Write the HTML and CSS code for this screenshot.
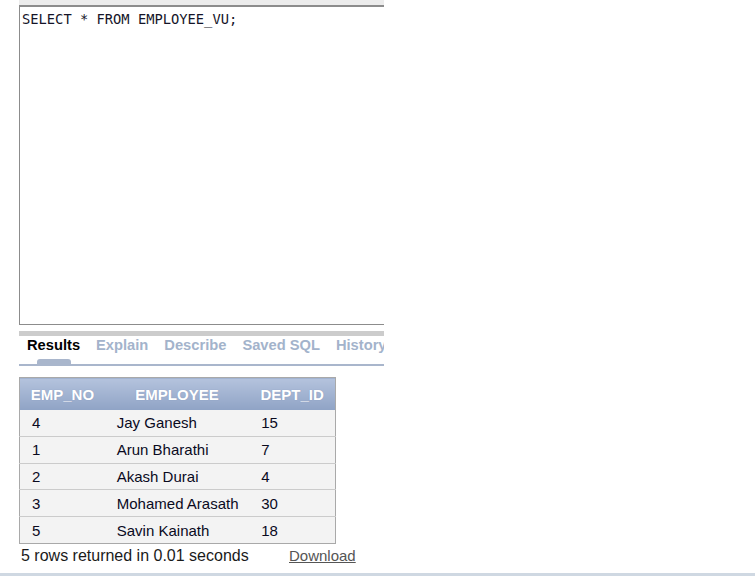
FILE: index.html
```html
<!DOCTYPE html>
<html>
<head>
<meta charset="utf-8">
<link rel="stylesheet" href="styles.css">
</head>
<body>
<div class="panel">
  <div class="editor-top"></div>
  <div class="editor">SELECT * FROM EMPLOYEE_VU;</div>
  <div class="sep-bar"></div>
  <div class="tabs">
    <div class="tab active"><span class="tab-label">Results</span><span class="tab-ind"></span></div>
    <div class="tab"><span class="tab-label">Explain</span><span class="tab-ind"></span></div>
    <div class="tab"><span class="tab-label">Describe</span><span class="tab-ind"></span></div>
    <div class="tab"><span class="tab-label">Saved SQL</span><span class="tab-ind"></span></div>
    <div class="tab"><span class="tab-label">History</span><span class="tab-ind"></span></div>
  </div>
</div>
<div class="results">
  <table class="grid">
    <colgroup><col class="c1"><col class="c2"><col class="c3"></colgroup>
    <thead>
      <tr><th>EMP_NO</th><th>EMPLOYEE</th><th>DEPT_ID</th></tr>
    </thead>
    <tbody>
      <tr><td>4</td><td>Jay Ganesh</td><td>15</td></tr>
      <tr><td>1</td><td>Arun Bharathi</td><td>7</td></tr>
      <tr><td>2</td><td>Akash Durai</td><td>4</td></tr>
      <tr><td>3</td><td>Mohamed Arasath</td><td>30</td></tr>
      <tr><td>5</td><td>Savin Kainath</td><td>18</td></tr>
    </tbody>
  </table>
  <div class="summary">
    <span class="count">5 rows returned in 0.01 seconds</span>
    <a class="download" href="#">Download</a>
  </div>
</div>
<div class="bottom-line"></div>
</body>
</html>
```
FILE: styles.css
```css
html, body {
  margin: 0;
  padding: 0;
  background: #fff;
  font-family: "Liberation Sans", Arial, sans-serif;
}

.panel {
  margin-left: 19px;
  width: 365px;
  overflow: hidden;
}

.editor-top {
  height: 5px;
  background: #ececec;
  border-bottom: 2px solid #8c8c8c;
}

.editor {
  box-sizing: border-box;
  width: 420px;
  height: 318px;
  border-left: 1px solid #8c8c8c;
  border-bottom: 1px solid #8c8c8c;
  padding: 4px 0 0 2px;
  font-family: "DejaVu Sans Mono", "Liberation Mono", monospace;
  font-size: 13.75px;
  line-height: 16px;
  color: #141428;
  white-space: pre;
}

.sep-bar {
  margin-top: 6px;
  height: 5px;
  background: #cccccc;
}

.tabs {
  display: flex;
  padding-top: 1px;
  border-bottom: 2px solid #a9b6cc;
  white-space: nowrap;
}

.tab {
  display: flex;
  flex-direction: column;
  align-items: center;
  padding: 0 8px;
  flex: none;
}

.tab-label {
  font-size: 14.7px;
  font-weight: bold;
  line-height: 17px;
  color: #a3b3cb;
}

.tab.active .tab-label {
  color: #000;
}

.tab-ind {
  margin-top: 5px;
  width: 34px;
  height: 5px;
  border-radius: 3px 3px 0 0;
}

.tab.active .tab-ind {
  background: #a9b6cc;
}

.results {
  margin-left: 19px;
  margin-top: 11px;
}

.grid {
  border-collapse: collapse;
  table-layout: fixed;
  width: 317px;
  border: 1px solid #a9a9a9;
  font-size: 15px;
}

.c1 { width: 85px; }
.c2 { width: 144px; }
.c3 { width: 86px; }

.grid th {
  height: 32.5px;
  padding: 0;
  box-sizing: border-box;
  background: linear-gradient(#b4c3dd, #8fa3c5);
  color: #fff;
  font-weight: bold;
  text-align: center;
  text-shadow: 0 0 1px rgba(90, 110, 150, 0.4);
}

.grid td {
  height: 25.8px;
  padding: 0 12px;
  background: #f3f3f3;
  border-bottom: 1px solid #cbcbcb;
  color: #0a0a1e;
  white-space: nowrap;
}

.grid tbody tr:last-child td {
  border-bottom: 1px solid #a9a9a9;
}

.summary {
  display: grid;
  grid-template-columns: 268px auto;
  align-items: baseline;
  margin-top: 3px;
  padding-left: 2px;
}

.count {
  font-size: 16px;
  color: #1a1a1a;
}

.download {
  font-size: 15px;
  color: #555;
  text-decoration: underline;
  justify-self: start;
}

.bottom-line {
  margin-top: 8px;
  height: 3px;
  background: #cfd8e2;
}
```
